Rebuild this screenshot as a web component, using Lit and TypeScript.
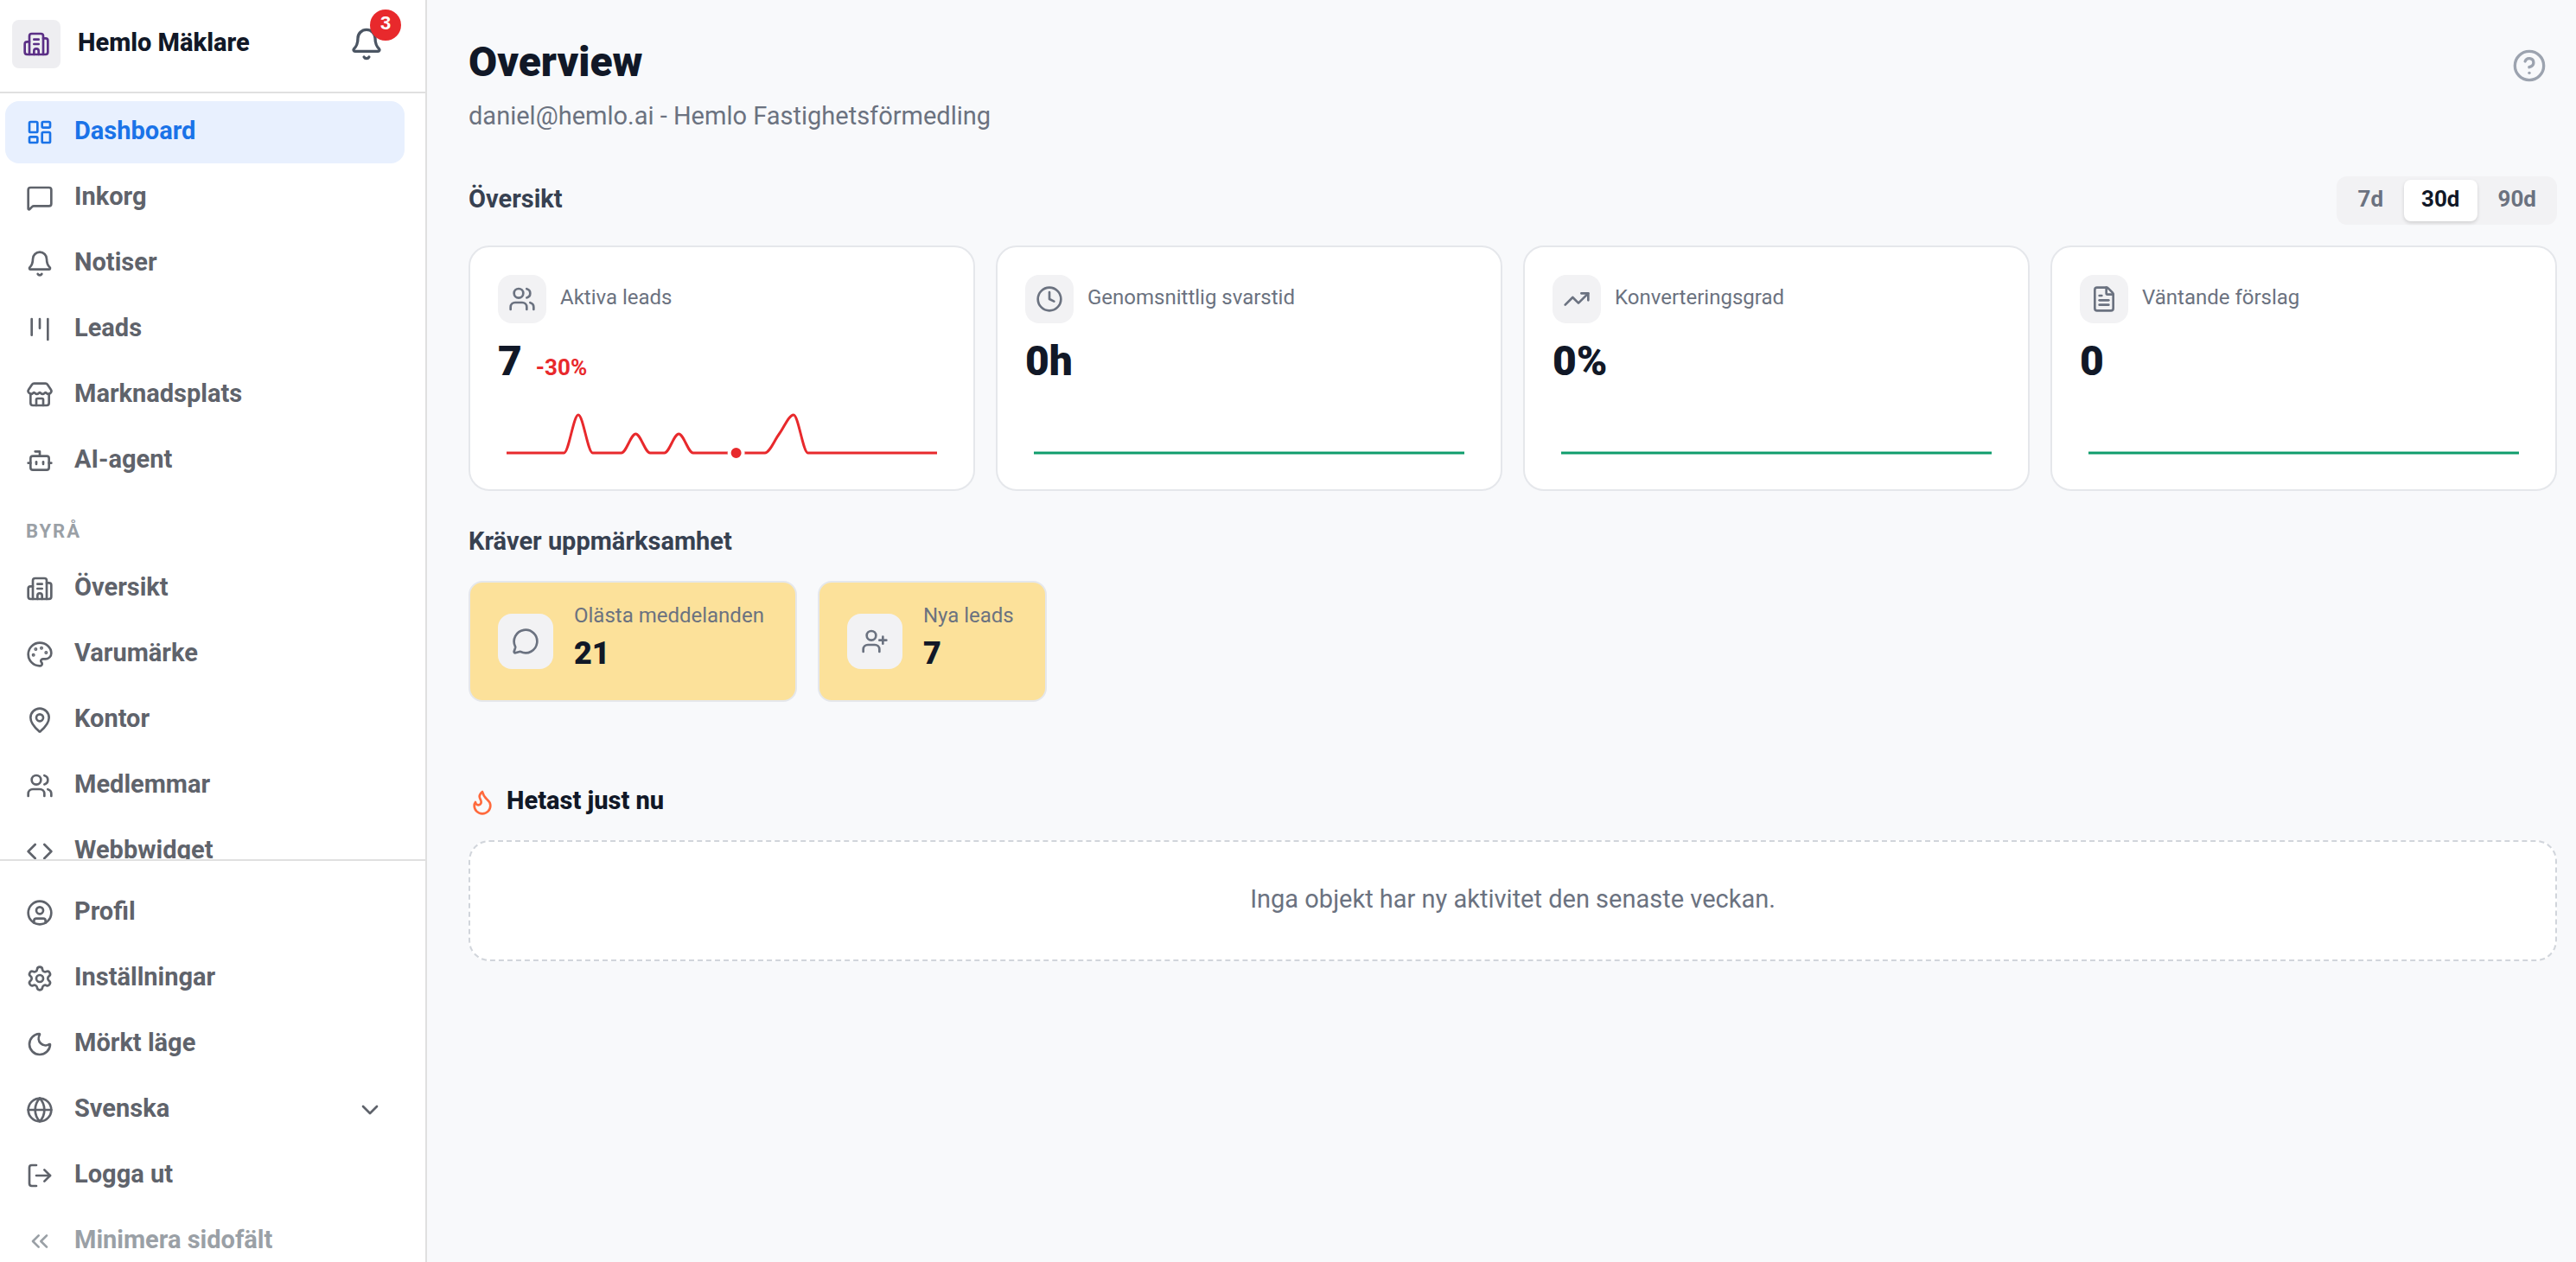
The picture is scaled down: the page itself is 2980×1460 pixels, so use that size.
import { LitElement, html, css, svg, type SVGTemplateResult, type TemplateResult } from "lit";
import { customElement, property, state } from "lit/decorators.js";
import { classMap } from "lit/directives/class-map.js";

const ICONS: Record<string, SVGTemplateResult> = {
  dashboard: svg`<rect width="7" height="9" x="3" y="3" rx="1"/><rect width="7" height="5" x="14" y="3" rx="1"/><rect width="7" height="9" x="14" y="12" rx="1"/><rect width="7" height="5" x="3" y="16" rx="1"/>`,
  message: svg`<path d="M22 17a2 2 0 0 1-2 2H6.828a2 2 0 0 0-1.414.586l-2.202 2.202A.71.71 0 0 1 2 21.286V5a2 2 0 0 1 2-2h16a2 2 0 0 1 2 2z"/>`,
  bell: svg`<path d="M10.268 21a2 2 0 0 0 3.464 0"/><path d="M3.262 15.326A1 1 0 0 0 4 17h16a1 1 0 0 0 .74-1.673C19.41 13.956 18 12.499 18 8A6 6 0 0 0 6 8c0 4.499-1.411 5.956-2.738 7.326"/>`,
  kanban: svg`<path d="M5 3v14"/><path d="M12 3v8"/><path d="M19 3v18"/>`,
  store: svg`<path d="M15 21v-5a1 1 0 0 0-1-1h-4a1 1 0 0 0-1 1v5"/><path d="M17.774 10.31a1.12 1.12 0 0 0-1.549 0 2.5 2.5 0 0 1-3.451 0 1.12 1.12 0 0 0-1.548 0 2.5 2.5 0 0 1-3.452 0 1.12 1.12 0 0 0-1.549 0 2.5 2.5 0 0 1-3.77-3.248l2.889-4.184A2 2 0 0 1 7 2h10a2 2 0 0 1 1.653.873l2.895 4.192a2.5 2.5 0 0 1-3.774 3.244"/><path d="M4 10.95V19a2 2 0 0 0 2 2h12a2 2 0 0 0 2-2v-8.05"/>`,
  bot: svg`<path d="M12 8V4H8"/><rect width="16" height="12" x="4" y="8" rx="2"/><path d="M2 14h2"/><path d="M20 14h2"/><path d="M15 13v2"/><path d="M9 13v2"/>`,
  building: svg`<path d="M10 12h4"/><path d="M10 8h4"/><path d="M14 21v-3a2 2 0 0 0-4 0v3"/><path d="M6 10H4a2 2 0 0 0-2 2v7a2 2 0 0 0 2 2h16a2 2 0 0 0 2-2V9a2 2 0 0 0-2-2h-2"/><path d="M6 21V5a2 2 0 0 1 2-2h8a2 2 0 0 1 2 2v16"/>`,
  palette: svg`<path d="M12 22a1 1 0 0 1 0-20 10 9 0 0 1 10 9 5 5 0 0 1-5 5h-2.25a1.75 1.75 0 0 0-1.4 2.8l.3.4a1.75 1.75 0 0 1-1.4 2.8z"/><circle cx="13.5" cy="6.5" r=".5" fill="currentColor"/><circle cx="17.5" cy="10.5" r=".5" fill="currentColor"/><circle cx="6.5" cy="12.5" r=".5" fill="currentColor"/><circle cx="8.5" cy="7.5" r=".5" fill="currentColor"/>`,
  pin: svg`<path d="M20 10c0 4.993-5.539 10.193-7.399 11.799a1 1 0 0 1-1.202 0C9.539 20.193 4 14.993 4 10a8 8 0 0 1 16 0"/><circle cx="12" cy="10" r="3"/>`,
  users: svg`<path d="M16 21v-2a4 4 0 0 0-4-4H6a4 4 0 0 0-4 4v2"/><path d="M16 3.128a4 4 0 0 1 0 7.744"/><path d="M22 21v-2a4 4 0 0 0-3-3.87"/><circle cx="9" cy="7" r="4"/>`,
  code: svg`<path d="m16 18 6-6-6-6"/><path d="m8 6-6 6 6 6"/>`,
  profile: svg`<circle cx="12" cy="12" r="10"/><circle cx="12" cy="10" r="3"/><path d="M7 20.662V19a2 2 0 0 1 2-2h6a2 2 0 0 1 2 2v1.662"/>`,
  settings: svg`<path d="M9.671 4.136a2.34 2.34 0 0 1 4.659 0 2.34 2.34 0 0 0 3.319 1.915 2.34 2.34 0 0 1 2.33 4.033 2.34 2.34 0 0 0 0 3.831 2.34 2.34 0 0 1-2.33 4.033 2.34 2.34 0 0 0-3.319 1.915 2.34 2.34 0 0 1-4.659 0 2.34 2.34 0 0 0-3.32-1.915 2.34 2.34 0 0 1-2.33-4.033 2.34 2.34 0 0 0 0-3.831A2.34 2.34 0 0 1 6.35 6.051a2.34 2.34 0 0 0 3.319-1.915"/><circle cx="12" cy="12" r="3"/>`,
  moon: svg`<path d="M20.985 12.486a9 9 0 1 1-9.473-9.472c.405-.022.617.46.402.803a6 6 0 0 0 8.268 8.268c.344-.215.825-.004.803.401"/>`,
  globe: svg`<circle cx="12" cy="12" r="10"/><path d="M12 2a14.5 14.5 0 0 0 0 20 14.5 14.5 0 0 0 0-20"/><path d="M2 12h20"/>`,
  logout: svg`<path d="m16 17 5-5-5-5"/><path d="M21 12H9"/><path d="M9 21H5a2 2 0 0 1-2-2V5a2 2 0 0 1 2-2h4"/>`,
  collapse: svg`<path d="m11 17-5-5 5-5"/><path d="m18 17-5-5 5-5"/>`,
  chevron: svg`<path d="m6 9 6 6 6-6"/>`,
  help: svg`<circle cx="12" cy="12" r="10"/><path d="M9.09 9a3 3 0 0 1 5.83 1c0 2-3 3-3 3"/><path d="M12 17h.01"/>`,
  clock: svg`<circle cx="12" cy="12" r="10"/><path d="M12 6v6l4 2"/>`,
  trend: svg`<path d="M16 7h6v6"/><path d="m22 7-8.5 8.5-5-5L2 17"/>`,
  file: svg`<path d="M6 22a2 2 0 0 1-2-2V4a2 2 0 0 1 2-2h8a2.4 2.4 0 0 1 1.704.706l3.588 3.588A2.4 2.4 0 0 1 20 8v12a2 2 0 0 1-2 2z"/><path d="M14 2v5a1 1 0 0 0 1 1h5"/><path d="M10 9H8"/><path d="M16 13H8"/><path d="M16 17H8"/>`,
  bubble: svg`<path d="M2.992 16.342a2 2 0 0 1 .094 1.167l-1.065 3.29a1 1 0 0 0 1.236 1.168l3.413-.998a2 2 0 0 1 1.099.092 10 10 0 1 0-4.777-4.719"/>`,
  userPlus: svg`<path d="M16 21v-2a4 4 0 0 0-4-4H6a4 4 0 0 0-4 4v2"/><circle cx="9" cy="7" r="4"/><path d="M19 8v6"/><path d="M22 11h-6"/>`,
  flame: svg`<path d="M12 3q1 4 4 6.5t3 5.5a1 1 0 0 1-14 0 5 5 0 0 1 1-3 1 1 0 0 0 5 0c0-2-1.5-3-1.5-5q0-2 2.5-4"/>`,
};

@customElement("ui-icon")
export class UiIcon extends LitElement {
  @property() name = "";

  static styles = css`
    :host {
      display: block;
      flex: none;
      width: 32px;
      height: 32px;
    }
    .glyph {
      display: block;
      width: 100%;
      height: 100%;
      fill: none;
      stroke: currentColor;
      stroke-width: 2;
      stroke-linecap: round;
      stroke-linejoin: round;
    }
  `;

  render() {
    return html`<svg class="glyph" viewBox="0 0 24 24" aria-hidden="true">${ICONS[this.name]}</svg>`;
  }
}

@customElement("spark-line")
export class SparkLine extends LitElement {
  @property({ type: Array }) values: number[] = [];
  @property({ type: Number }) marker = -1;

  static styles = css`
    :host {
      display: block;
    }
    .chart {
      display: block;
      width: 100%;
      height: auto;
    }
    .line {
      fill: none;
      stroke: currentColor;
      stroke-width: 3;
    }
    .dot {
      fill: currentColor;
      stroke: #ffffff;
      stroke-width: 4;
    }
  `;

  private readonly width = 518;
  private readonly height = 80;
  private readonly inset = 10;
  private readonly rise = 44;

  private point(i: number): [number, number] {
    const step = (this.width - 2 * this.inset) / Math.max(1, this.values.length - 1);
    const top = Math.max(1, ...this.values);
    return [this.inset + i * step, this.height - this.inset - (this.values[i] / top) * this.rise];
  }

  // Monotone cubic through the points, so the curve never dips below the base line.
  private path(): string {
    const pts = this.values.map((_, i) => this.point(i));
    const slope = (i: number): number => {
      if (i <= 0 || i >= pts.length - 1) return 0;
      const a = pts[i][1] - pts[i - 1][1];
      const b = pts[i + 1][1] - pts[i][1];
      return a * b <= 0 ? 0 : (a + b) / 2;
    };
    return pts
      .map(([x, y], i) => {
        if (i === 0) return `M${x} ${y}`;
        const [px, py] = pts[i - 1];
        const third = (x - px) / 3;
        return `C${px + third} ${py + slope(i - 1) / 3} ${x - third} ${y - slope(i) / 3} ${x} ${y}`;
      })
      .join("");
  }

  render() {
    const mark = this.marker >= 0 ? this.point(this.marker) : null;
    return html`<svg class="chart" viewBox="0 0 ${this.width} ${this.height}" aria-hidden="true">
      <path class="line" d=${this.path()}></path>
      ${mark ? svg`<circle class="dot" cx=${mark[0]} cy=${mark[1]} r="8"/>` : null}
    </svg>`;
  }
}

interface NavItem {
  icon: string;
  label: string;
}

interface Metric {
  icon: string;
  label: string;
  value: string;
  change?: string;
  values: number[];
  marker: number;
}

const PRIMARY: NavItem[] = [
  { icon: "dashboard", label: "Dashboard" },
  { icon: "message", label: "Inkorg" },
  { icon: "bell", label: "Notiser" },
  { icon: "kanban", label: "Leads" },
  { icon: "store", label: "Marknadsplats" },
  { icon: "bot", label: "AI-agent" },
];

const AGENCY: NavItem[] = [
  { icon: "building", label: "Översikt" },
  { icon: "palette", label: "Varumärke" },
  { icon: "pin", label: "Kontor" },
  { icon: "users", label: "Medlemmar" },
  { icon: "code", label: "Webbwidget" },
];

const FLAT: number[] = new Array(31).fill(0);
const LEADS: number[] = FLAT.map((_, i) => ({ 5: 2, 9: 1, 12: 1, 19: 1, 20: 2 } as Record<number, number>)[i] ?? 0);

const METRICS: Metric[] = [
  { icon: "users", label: "Aktiva leads", value: "7", change: "-30%", values: LEADS, marker: 16 },
  { icon: "clock", label: "Genomsnittlig svarstid", value: "0h", values: FLAT, marker: -1 },
  { icon: "trend", label: "Konverteringsgrad", value: "0%", values: FLAT, marker: -1 },
  { icon: "file", label: "Väntande förslag", value: "0", values: FLAT, marker: -1 },
];

const ALERTS = [
  { icon: "bubble", label: "Olästa meddelanden", value: "21" },
  { icon: "userPlus", label: "Nya leads", value: "7" },
];

@customElement("side-bar")
export class SideBar extends LitElement {
  @state() private current = "Dashboard";

  static styles = css`
    :host {
      display: flex;
      flex-direction: column;
      flex: none;
      box-sizing: border-box;
      width: 494px;
      overflow: hidden;
      background: #ffffff;
      border-right: 2px solid #e0e0e0;
      color: #5f636b;
    }
    .brand {
      display: flex;
      align-items: center;
      gap: 20px;
      flex: none;
      padding: 0 48px 4px 14px;
      height: 102px;
      border-bottom: 2px solid #e0e0e0;
    }
    .logo {
      display: grid;
      place-items: center;
      width: 56px;
      height: 56px;
      border-radius: 8px;
      background: #eeeef1;
      color: #5b2f86;
    }
    .name {
      flex: 1;
      padding-bottom: 4px;
      color: #111827;
      font-size: 29px;
      line-height: 32px;
      font-weight: 800;
    }
    .alerts {
      position: relative;
      display: block;
      padding: 0;
      border: 0;
      background: none;
      color: #4b5563;
      cursor: pointer;
    }
    .alerts ui-icon {
      width: 40px;
      height: 40px;
    }
    .count {
      position: absolute;
      top: -20px;
      left: 24px;
      width: 36px;
      height: 36px;
      box-sizing: border-box;
      border-radius: 18px;
      background: #e8292c;
      color: #ffffff;
      font: inherit;
      font-size: 22px;
      line-height: 32px;
      font-weight: 700;
      text-align: center;
    }
    .menu,
    .tools {
      display: flex;
      flex-direction: column;
      gap: 4px;
      padding: 9px 24px 0 6px;
    }
    .menu {
      flex: 1;
      min-height: 0;
      overflow: hidden;
    }
    .tools {
      flex: none;
      margin-bottom: -12px;
      padding-top: 24px;
      border-top: 2px solid #e0e0e0;
    }
    .item {
      display: flex;
      align-items: center;
      flex: none;
      gap: 24px;
      box-sizing: border-box;
      width: 100%;
      height: 72px;
      padding: 0 24px;
      border: 0;
      border-radius: 16px;
      background: none;
      color: inherit;
      font: inherit;
      font-size: 29px;
      line-height: 32px;
      font-weight: 700;
      text-align: left;
      text-decoration: none;
      cursor: pointer;
    }
    .item.active {
      background: #e8f0fe;
      color: #1a73e8;
    }
    .item.muted {
      color: #9aa0a6;
    }
    .text {
      flex: 1;
      padding: 0 0 4px;
    }
    .language {
      appearance: none;
      border: 0;
      margin: 0;
      background: none;
      color: inherit;
      font: inherit;
      cursor: pointer;
    }
    .group {
      margin: 0;
      flex: none;
      padding: 28px 24px 12px;
      color: #9aa0a6;
      font-size: 22px;
      line-height: 28px;
      font-weight: 700;
      letter-spacing: 2px;
    }
  `;

  private link(item: NavItem): TemplateResult {
    const active = item.label === this.current;
    return html`<a
      class=${classMap({ item: true, active })}
      href="#${item.icon}"
      aria-current=${active ? "page" : "false"}
      @click=${() => (this.current = item.label)}
    >
      <ui-icon name=${item.icon}></ui-icon><span class="text">${item.label}</span>
    </a>`;
  }

  private action(icon: string, label: string, muted = false): TemplateResult {
    return html`<button class=${classMap({ item: true, muted })} type="button">
      <ui-icon name=${icon}></ui-icon><span class="text">${label}</span>
    </button>`;
  }

  render() {
    return html`
      <header class="brand">
        <span class="logo"><ui-icon name="building"></ui-icon></span>
        <span class="name">Hemlo Mäklare</span>
        <button class="alerts" type="button" aria-label="Notiser">
          <ui-icon name="bell"></ui-icon><span class="count">3</span>
        </button>
      </header>
      <nav class="menu">
        ${PRIMARY.map((item) => this.link(item))}
        <h2 class="group">BYRÅ</h2>
        ${AGENCY.map((item) => this.link(item))}
      </nav>
      <div class="tools">
        ${this.link({ icon: "profile", label: "Profil" })}
        ${this.link({ icon: "settings", label: "Inställningar" })}
        ${this.action("moon", "Mörkt läge")}
        <label class="item">
          <ui-icon name="globe"></ui-icon>
          <select class="text language" aria-label="Språk">
            <option>Svenska</option>
          </select>
          <ui-icon name="chevron"></ui-icon>
        </label>
        ${this.action("logout", "Logga ut")} ${this.action("collapse", "Minimera sidofält", true)}
      </div>
    `;
  }
}

@customElement("app-root")
export class AppRoot extends LitElement {
  @state() private period = "30d";

  static styles = css`
    :host {
      display: flex;
      height: 100vh;
      overflow: hidden;
      background: #f8f9fb;
      color: #111827;
      font-family: Roboto, "Liberation Sans", sans-serif;
      font-size: 29px;
      line-height: 32px;
    }
    .page {
      flex: 1;
      min-width: 0;
      padding: 44px 22px 48px 48px;
    }
    .top {
      display: flex;
      justify-content: space-between;
      align-items: flex-start;
    }
    .title {
      margin: 0;
      font-size: 48px;
      line-height: 56px;
      font-weight: 900;
    }
    .account {
      margin: 0;
      padding-top: 18px;
      color: #6b7280;
    }
    .help {
      margin: 12px 12px 0 0;
      padding: 0;
      border: 0;
      background: none;
      color: #9ca3af;
      cursor: pointer;
    }
    .help ui-icon {
      width: 40px;
      height: 40px;
    }
    .bar {
      display: flex;
      align-items: center;
      justify-content: space-between;
      margin: 54px 0 24px;
    }
    .section {
      margin: 0;
      padding-bottom: 4px;
      color: #374151;
      font-size: 29px;
      line-height: 32px;
      font-weight: 700;
    }
    .periods {
      display: flex;
      gap: 4px;
      padding: 4px;
      border-radius: 12px;
      background: #f2f2f4;
    }
    .period {
      height: 48px;
      padding: 0 20px 4px;
      border: 0;
      border-radius: 8px;
      background: none;
      color: #6b7280;
      font: inherit;
      font-size: 26px;
      font-weight: 700;
      cursor: pointer;
    }
    .period.on {
      background: #ffffff;
      color: #111827;
      box-shadow: 0 2px 4px rgba(0, 0, 0, 0.14);
    }
    .metrics {
      display: grid;
      grid-template-columns: repeat(4, minmax(0, 1fr));
      gap: 24px;
      margin-bottom: 42px;
    }
    .metric {
      padding: 32px;
      border: 2px solid #e5e7eb;
      border-radius: 24px;
      background: #ffffff;
    }
    .head {
      display: flex;
      align-items: center;
      gap: 16px;
    }
    .tile {
      display: grid;
      place-items: center;
      flex: none;
      width: 56px;
      height: 56px;
      border-radius: 16px;
      background: #f2f2f4;
      color: #6b7280;
    }
    .tile.large {
      width: 64px;
      height: 64px;
    }
    .label {
      padding-bottom: 4px;
      color: #6b7280;
      font-size: 24px;
      line-height: 32px;
    }
    .figures {
      display: flex;
      align-items: baseline;
      gap: 16px;
      padding: 16px 0 8px;
    }
    .value {
      font-size: 48px;
      line-height: 56px;
      font-weight: 900;
    }
    .change {
      color: #e8292c;
      font-size: 26px;
      font-weight: 700;
    }
    .down {
      color: #e8292c;
    }
    .flat {
      color: #0f9d6c;
    }
    .notices {
      display: flex;
      gap: 24px;
      margin: 26px 0 98px;
    }
    .notice {
      display: flex;
      align-items: center;
      gap: 24px;
      padding: 20px 32px;
      border: 2px solid #e5e7eb;
      border-radius: 16px;
      background: #fce19a;
      color: inherit;
      text-decoration: none;
    }
    .facts {
      display: flex;
      flex-direction: column;
      gap: 4px;
      padding: 2px 4px 0 0;
    }
    .total {
      padding-bottom: 14px;
      font-size: 36px;
      line-height: 40px;
      font-weight: 900;
    }
    .hot {
      display: flex;
      align-items: center;
      gap: 12px;
    }
    .hot ui-icon {
      color: #ff6a3d;
    }
    .hot .section {
      color: #111827;
      font-weight: 800;
    }
    .empty {
      margin: 26px 0 0;
      padding: 50px 32px 54px;
      border: 2px dashed #d1d5db;
      border-radius: 24px;
      background: #ffffff;
      color: #6b7280;
      text-align: center;
    }
  `;

  private metric(m: Metric): TemplateResult {
    return html`<article class="metric">
      <div class="head">
        <span class="tile"><ui-icon name=${m.icon}></ui-icon></span><span class="label">${m.label}</span>
      </div>
      <div class="figures">
        <span class="value">${m.value}</span>${m.change ? html`<span class="change">${m.change}</span>` : null}
      </div>
      <spark-line class=${m.change ? "down" : "flat"} .values=${m.values} .marker=${m.marker}></spark-line>
    </article>`;
  }

  render() {
    return html`
      <side-bar></side-bar>
      <main class="page">
        <header class="top">
          <div>
            <h1 class="title">Overview</h1>
            <p class="account">daniel@hemlo.ai - Hemlo Fastighetsförmedling</p>
          </div>
          <button class="help" type="button" aria-label="Hjälp"><ui-icon name="help"></ui-icon></button>
        </header>
        <div class="bar">
          <h2 class="section">Översikt</h2>
          <div class="periods" role="group" aria-label="Period">
            ${["7d", "30d", "90d"].map(
              (p) => html`<button
                class=${classMap({ period: true, on: p === this.period })}
                type="button"
                aria-pressed=${p === this.period}
                @click=${() => (this.period = p)}
              >${p}</button>`
            )}
          </div>
        </div>
        <section class="metrics">${METRICS.map((m) => this.metric(m))}</section>
        <h2 class="section">Kräver uppmärksamhet</h2>
        <section class="notices">
          ${ALERTS.map(
            (a) => html`<a class="notice" href="#${a.icon}">
              <span class="tile large"><ui-icon name=${a.icon}></ui-icon></span>
              <span class="facts"><span class="label">${a.label}</span><span class="total">${a.value}</span></span>
            </a>`
          )}
        </section>
        <div class="hot">
          <ui-icon name="flame"></ui-icon>
          <h2 class="section">Hetast just nu</h2>
        </div>
        <p class="empty">Inga objekt har ny aktivitet den senaste veckan.</p>
      </main>
    `;
  }
}
